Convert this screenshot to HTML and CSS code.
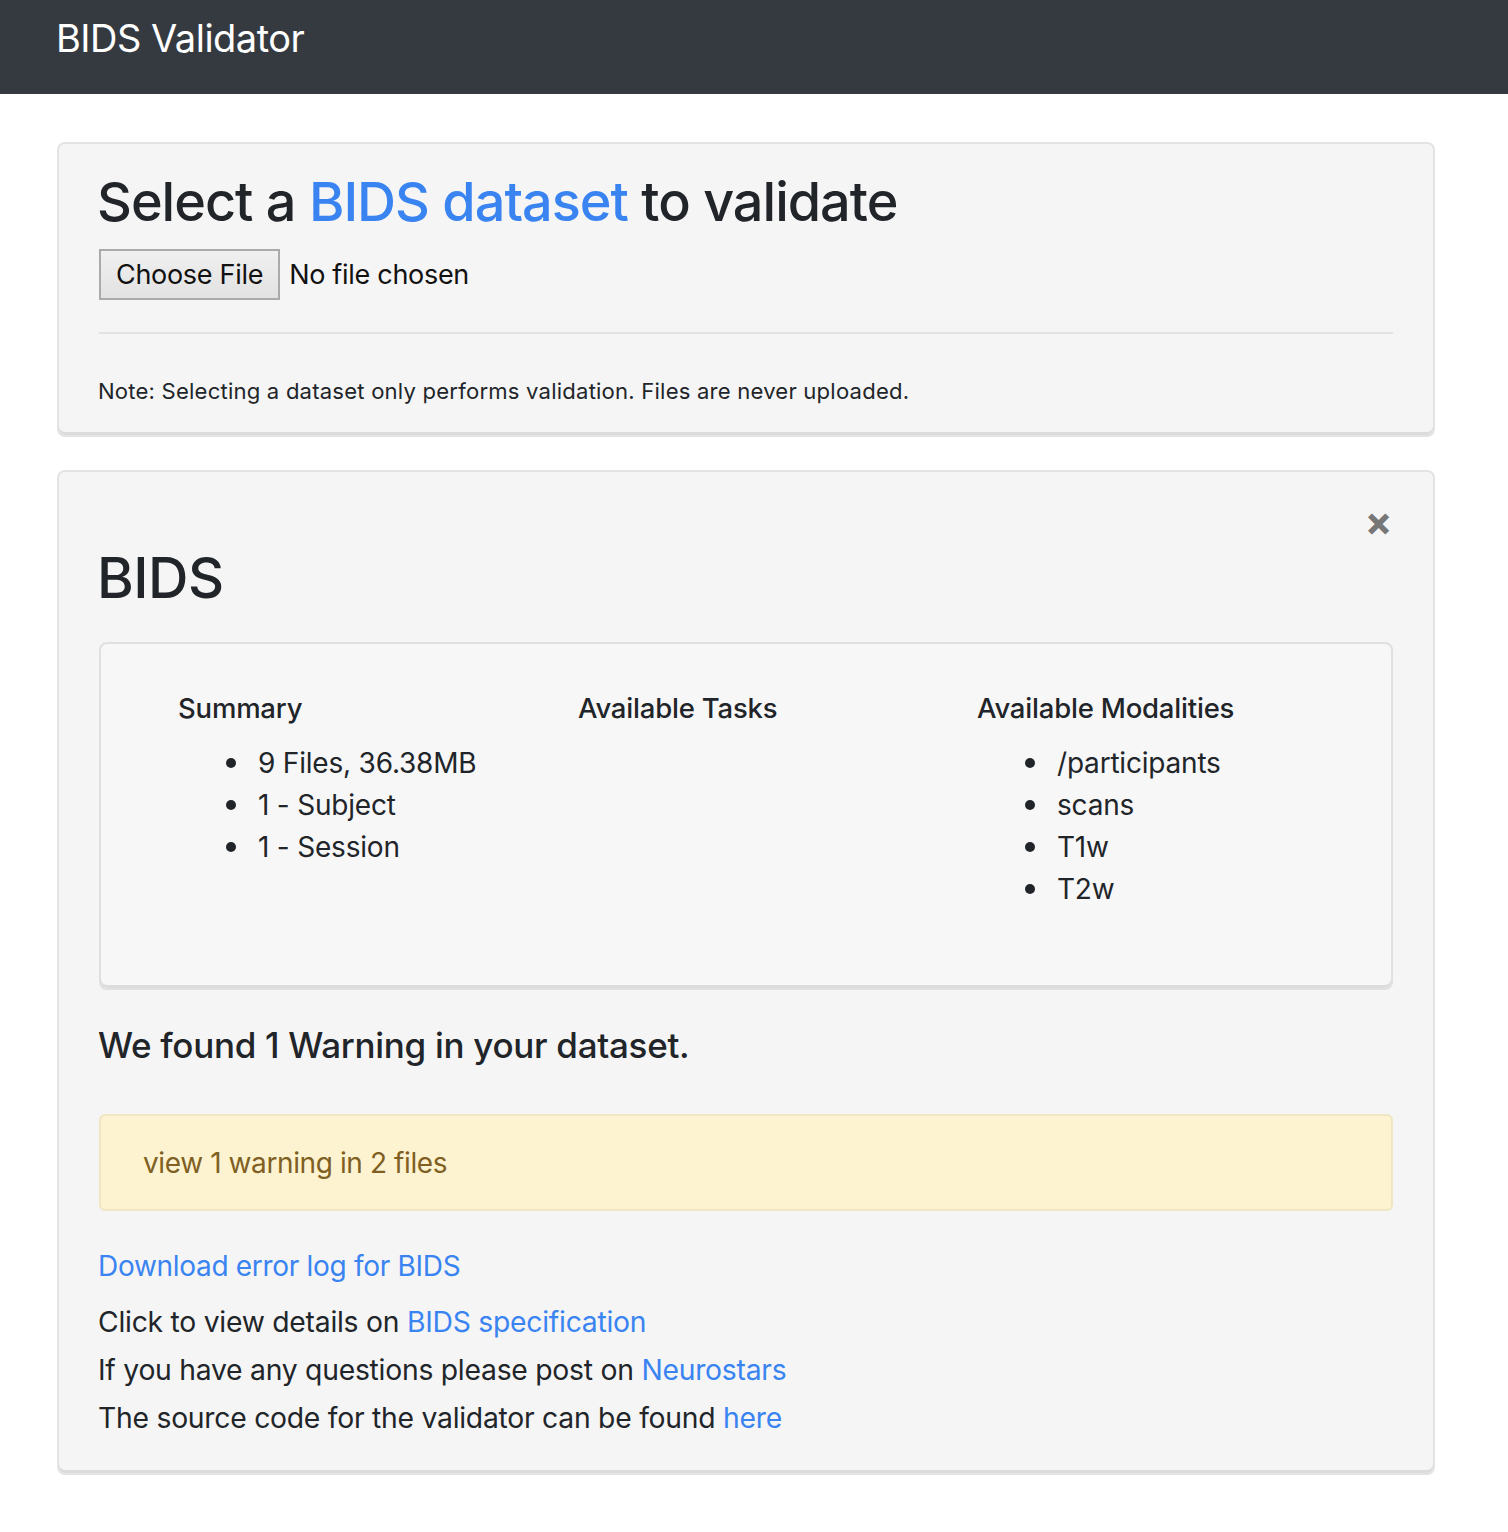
FILE: index.html
```html
<!DOCTYPE html>
<html>
<head>
<meta charset="utf-8">
<title>BIDS Validator</title>
<link rel="stylesheet" href="styles.css">
</head>
<body>
<nav class="navbar"><span class="brand">BIDS Validator</span></nav>
<main class="container">
  <section class="well upload">
    <h2 class="title">Select a <a href="#">BIDS dataset</a> to validate</h2>
    <div class="file-row">
      <span class="file-btn">Choose File</span>
      <span class="file-name">No file chosen</span>
    </div>
    <hr class="rule">
    <p class="note">Note: Selecting a dataset only performs validation. Files are never uploaded.</p>
  </section>

  <section class="well results">
    <span class="close">&#x2715;</span>
    <h2 class="ds-title">BIDS</h2>
    <div class="summary">
      <div class="col">
        <h4 class="col-title">Summary</h4>
        <ul class="list">
          <li>9 Files, 36.38MB</li>
          <li>1 - Subject</li>
          <li>1 - Session</li>
        </ul>
      </div>
      <div class="col">
        <h4 class="col-title">Available Tasks</h4>
        <ul class="list"></ul>
      </div>
      <div class="col">
        <h4 class="col-title">Available Modalities</h4>
        <ul class="list">
          <li>/participants</li>
          <li>scans</li>
          <li>T1w</li>
          <li>T2w</li>
        </ul>
      </div>
    </div>
    <h3 class="found">We found 1 Warning in your dataset.</h3>
    <div class="warning">view 1 warning in 2 files</div>
    <p class="download"><a href="#">Download error log for BIDS</a></p>
    <p class="info">Click to view details on <a href="#">BIDS specification</a></p>
    <p class="info">If you have any questions please post on <a href="#">Neurostars</a></p>
    <p class="info">The source code for the validator can be found <a href="#">here</a></p>
  </section>
</main>
</body>
</html>
```
FILE: styles.css
```css
* { box-sizing: border-box; }
body {
  margin: 0;
  background: #fff;
  color: #212529;
  font-family: Inter, "Helvetica Neue", Arial, sans-serif;
}
a { color: #3a84f2; text-decoration: none; }

.navbar {
  height: 94px;
  background: #343a40;
  padding: 12px 56px;
}
.brand {
  color: #fff;
  font-size: 38px;
  line-height: 52px;
  letter-spacing: -0.5px;
}

.container {
  width: 1378px;
  margin: 48px 0 0 57px;
}

.well {
  background: #f5f5f5;
  border: 2px solid #e3e3e3;
  border-radius: 8px;
  box-shadow: inset 0 -3px 0 #dcdcdc;
  padding: 0 40px;
}

.upload { height: 295px; }
.title {
  margin: 25px 0 0 -2px;
  font-size: 54px;
  font-weight: 500;
  line-height: 66px;
  letter-spacing: -1px;
}
.file-row {
  margin-top: 14px;
  display: flex;
  align-items: center;
  gap: 9px;
  font-size: 27px;
  letter-spacing: -0.3px;
}
.file-btn {
  display: inline-block;
  height: 51px;
  line-height: 47px;
  padding: 0 15px;
  border: 2px solid #aaa;
  background: linear-gradient(#f0f0f0, #e2e2e2);
  color: #111;
}
.file-name { color: #111; }
.rule {
  margin: 32px 0 0;
  border: 0;
  border-top: 2px solid #e2e2e2;
}
.note {
  margin: 42px 0 0 -1px;
  font-size: 22.1px;
  line-height: 30px;
  letter-spacing: 0.2px;
}

.results {
  position: relative;
  margin-top: 33px;
  height: 1005px;
}
.close {
  position: absolute;
  top: 34px;
  right: 42px;
  color: #777;
  font-size: 30px;
  font-weight: 900;
  line-height: 36px;
  -webkit-text-stroke: 1.5px #777;
}
.ds-title {
  margin: 71px 0 0 -2px;
  font-size: 56px;
  font-weight: 500;
  line-height: 70px;
  letter-spacing: -0.5px;
}
.summary {
  margin-top: 29px;
  height: 348px;
  background: #f7f7f7;
  border: 2px solid #e0e0e0;
  border-radius: 8px;
  box-shadow: inset 0 -3px 0 #dcdcdc;
  display: grid;
  grid-template-columns: 400px 399px 380px;
  padding: 44px 0 0 77px;
}
.col-title {
  margin: 0;
  font-size: 27.5px;
  font-weight: 500;
  line-height: 40px;
  letter-spacing: -0.2px;
}
.list {
  margin: 14px 0 0;
  padding-left: 80px;
  list-style: none;
  font-size: 28px;
  line-height: 42px;
  letter-spacing: -0.2px;
}
.list li { position: relative; }
.list li::before {
  content: "";
  position: absolute;
  left: -32px;
  top: 16px;
  width: 10px;
  height: 10px;
  border-radius: 50%;
  background: #212529;
}
.found {
  margin: 33px 0 0 -1px;
  font-size: 35px;
  font-weight: 500;
  line-height: 44px;
  letter-spacing: -0.3px;
}
.warning {
  margin-top: 47px;
  height: 97px;
  background: #fdf3d1;
  border: 2px solid #efe6c4;
  border-radius: 6px;
  padding: 0 42px;
  color: #7f5f22;
  font-size: 28px;
  line-height: 95px;
  letter-spacing: -0.4px;
}
.download {
  margin: 35px 0 0 -1px;
  font-size: 28px;
  line-height: 40px;
  letter-spacing: -0.3px;
}
.info {
  margin: 8px 0 0 -1px;
  font-size: 28.3px;
  line-height: 40px;
  letter-spacing: -0.25px;
}
.download + .info { margin-top: 16px; }
```
